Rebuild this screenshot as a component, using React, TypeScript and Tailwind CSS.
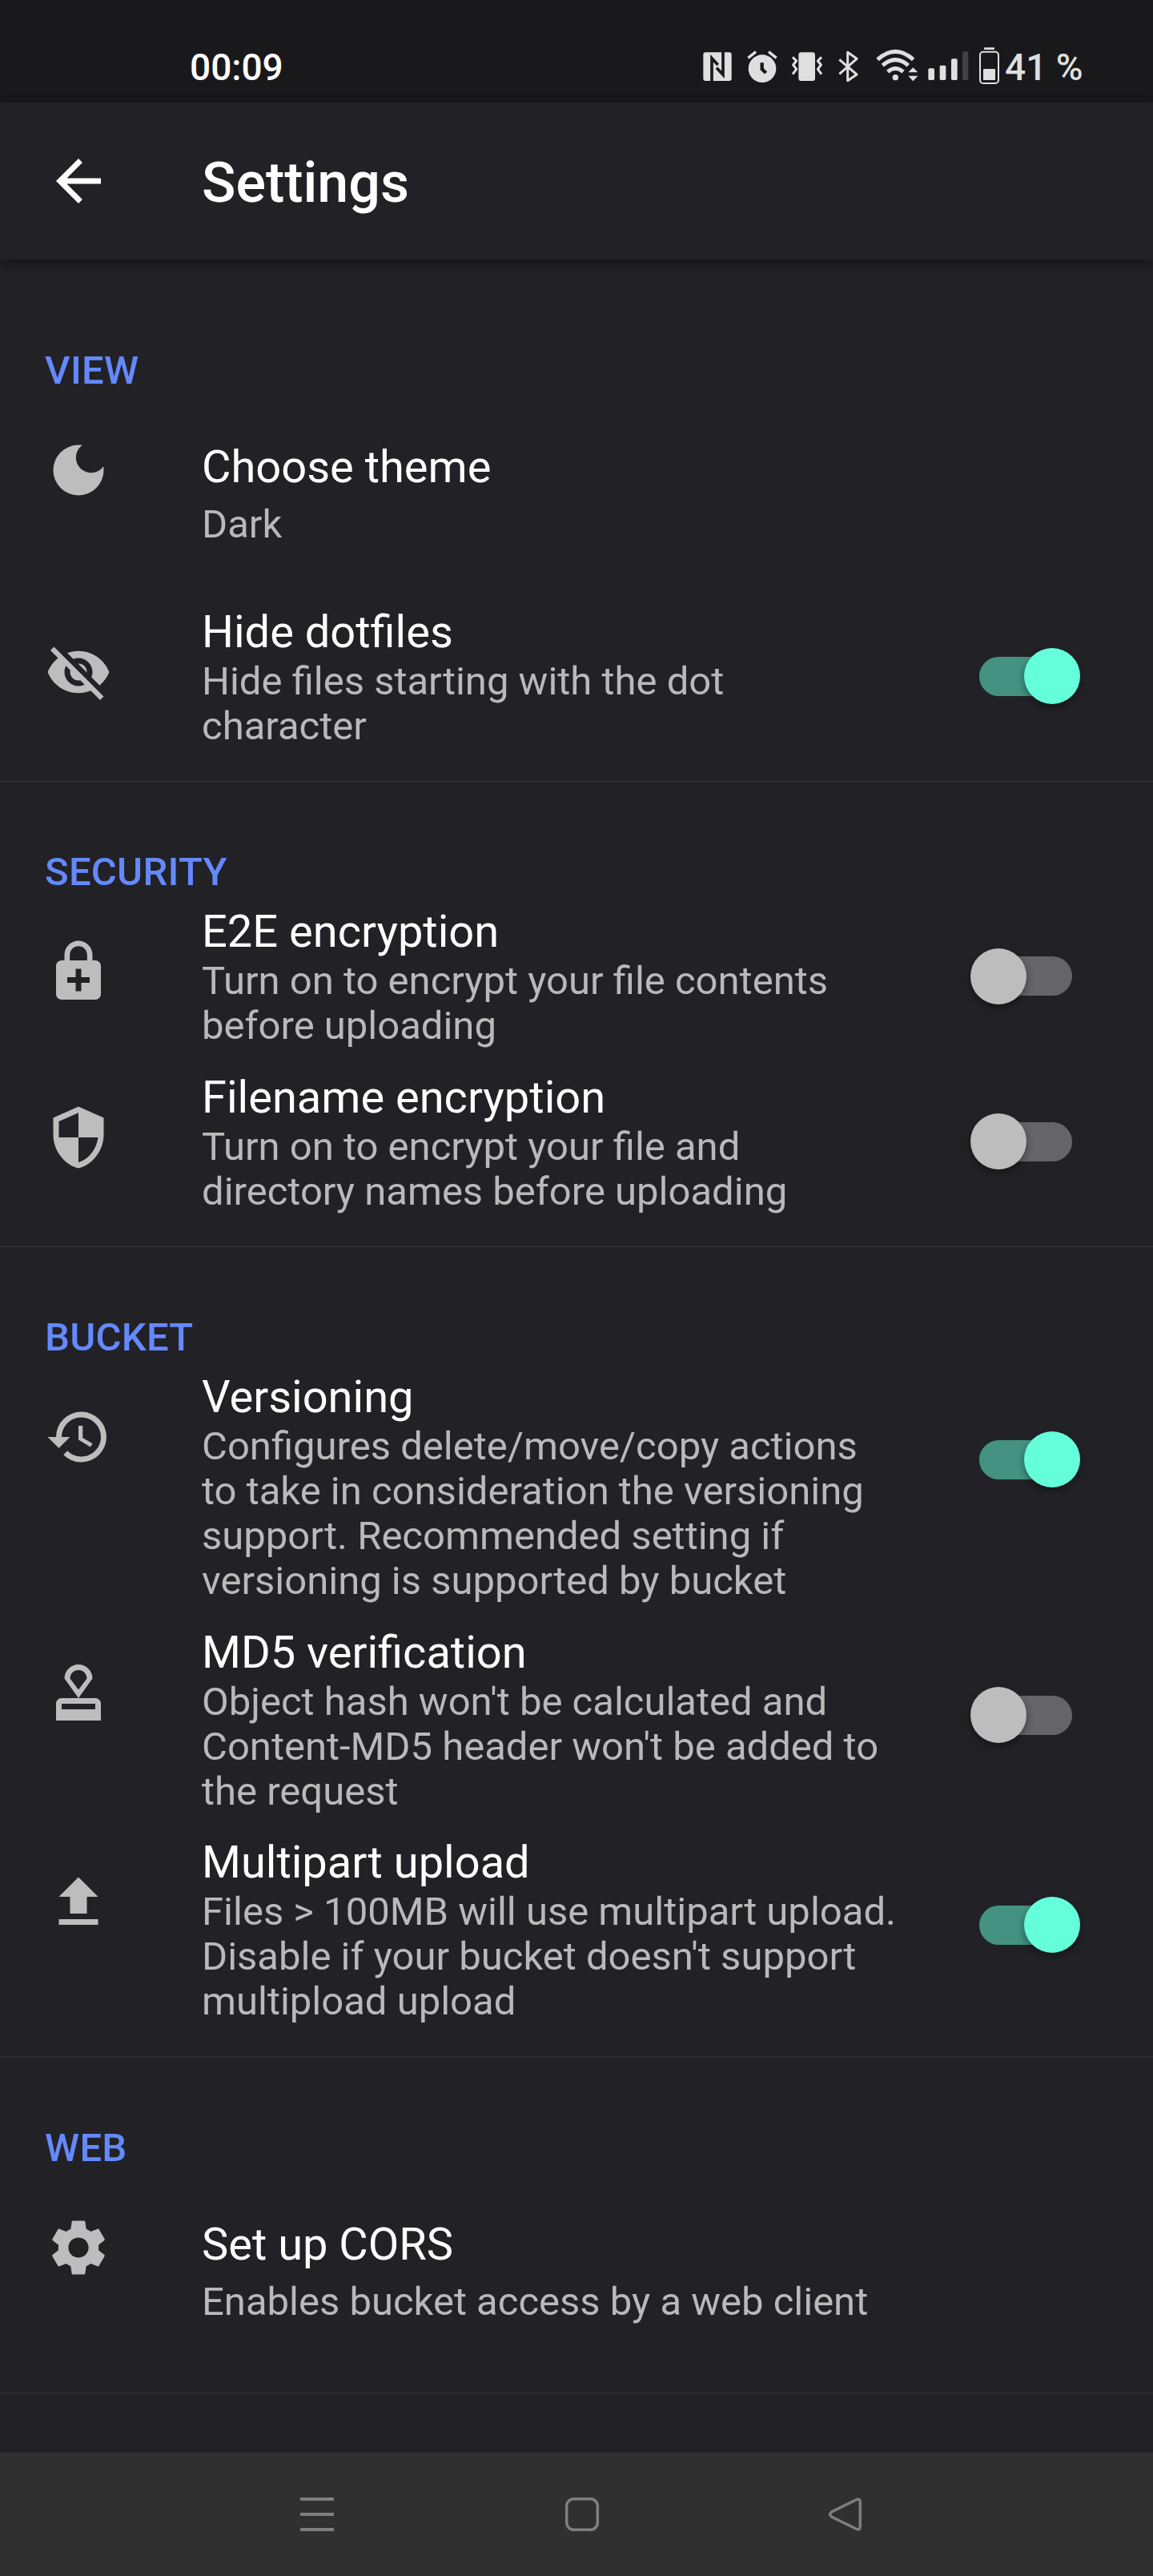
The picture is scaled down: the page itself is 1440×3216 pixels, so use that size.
import type { ReactNode } from "react";
import {
  MdApproval,
  MdArrowBack,
  MdDarkMode,
  MdEnhancedEncryption,
  MdHistory,
  MdSettings,
  MdUpload,
  MdVisibilityOff,
} from "react-icons/md";

/* Status bar glyphs share one 264-unit tall coordinate system (3 units per pixel). */
function StatusIcon({ x, w, className, children }: { x: number; w: number; className: string; children: ReactNode }) {
  return (
    <svg viewBox={`${x} 0 ${w} 264`} className={`mt-10 h-[88px] shrink-0 ${className}`} fill="currentColor">
      {children}
    </svg>
  );
}

function StatusBar() {
  return (
    <header className="flex h-32 items-start bg-[#19191b] text-[46px] leading-[54px] font-medium text-[#dfdfdf]">
      <span className="mt-[57px] ml-[237px] w-[641px] text-white">00:09</span>
      <StatusIcon x={54} w={111} className="w-[37px]">
        <rect x="55" y="76" width="106" height="107" rx="9" />
        <path d="M87 184V98L110 123M129 75V160L105 134" fill="none" stroke="#19191b" strokeWidth="11" />
      </StatusIcon>
      <StatusIcon x={219} w={114} className="ml-[18px] w-[38px]">
        <circle cx="276" cy="137" r="52" />
        <path d="M223 97l29-23M329 97l-29-23" stroke="currentColor" strokeWidth="10" />
        <path d="M275 115v24l15 14" fill="none" stroke="#19191b" strokeWidth="13" />
      </StatusIcon>
      <StatusIcon x={384} w={120} className="ml-[17px] w-10">
        <rect x="412" y="76" width="62" height="107" rx="10" />
        <path
          d="M390 94l14 14-12 15 12 16-14 19M498 94l-14 14 12 15-12 16 14 19"
          fill="none"
          stroke="currentColor"
          strokeWidth="9"
          strokeLinejoin="round"
        />
      </StatusIcon>
      <StatusIcon x={558} w={84} className="ml-[18px] w-7">
        <path
          d="M565 103l65 56-34 23V76l34 24-65 57"
          fill="none"
          stroke="currentColor"
          strokeWidth="9"
          strokeLinejoin="round"
        />
      </StatusIcon>
      <StatusIcon x={699} w={162} className="ml-[19px] w-[54px]">
        <g fill="none" stroke="currentColor" strokeWidth="15">
          <path d="M708 103q67-60 134 0" />
          <path d="M727 125q48-42 96 0" />
          <path d="M746 149q29-25 58 0" />
        </g>
        <circle cx="775" cy="170" r="11" />
        <path d="M823 151l18-18 18 18zM823 164h36l-18 20z" />
      </StatusIcon>
      <StatusIcon x={894} w={156} className="ml-[11px] w-[52px]">
        <rect x="898" y="136" width="23" height="44" rx="5" />
        <rect x="941" y="125" width="23" height="55" rx="5" />
        <rect x="984" y="100" width="23" height="80" rx="5" />
        <rect x="1026" y="73" width="22" height="107" rx="5" fill="#424244" />
      </StatusIcon>
      <StatusIcon x={1086} w={81} className="ml-3 w-[27px]">
        <rect x="1107" y="58" width="39" height="8" rx="3" />
        <rect x="1092" y="74" width="69" height="118" rx="12" fill="none" stroke="currentColor" strokeWidth="6" />
        <rect x="1104" y="138" width="45" height="42" rx="3" />
      </StatusIcon>
      <span className="mt-[57px] ml-1.5 whitespace-nowrap">41 %</span>
    </header>
  );
}

function Switch({ on, className }: { on: boolean; className: string }) {
  return (
    <div className={`relative ml-auto mr-[91px] h-[70px] w-[137px] shrink-0 ${className}`}>
      <div className={`absolute inset-x-[10.5px] top-[10.5px] h-[49px] rounded-full ${on ? "bg-[#439282]" : "bg-[#656567]"}`} />
      <div
        className={`absolute top-0 size-[70px] rounded-full shadow-[0_4px_10px_rgba(0,0,0,0.4)] ${
          on ? "right-0 bg-[#64ffda]" : "left-0 bg-[#bdbdbd]"
        }`}
      />
    </div>
  );
}

type RowProps = {
  icon: ReactNode;
  title: string;
  lines: string[];
  on?: boolean;
  className: string;
  switchClass?: string;
};

function Row({ icon, title, lines, on, className, switchClass = "" }: RowProps) {
  const plain = on === undefined;
  return (
    <div className={`flex items-start ${className}`}>
      <div className={`ml-14 w-[196px] shrink-0 text-[84px] text-[#bdbdbd] ${plain ? "-mt-[5px]" : "mt-[41px]"}`}>{icon}</div>
      <div className="whitespace-nowrap">
        <div className="text-[56px] leading-[66px] text-white">{title}</div>
        <div className={`text-[49px] leading-[56px] text-[#b9b9ba] ${plain ? "mt-[11px]" : "mt-px"}`}>
          {lines.map((line) => (
            <div key={line}>{line}</div>
          ))}
        </div>
      </div>
      {!plain && <Switch on={on} className={switchClass} />}
    </div>
  );
}

function SectionTitle({ children, className }: { children: string; className: string }) {
  return (
    <h2 className={`ml-14 h-14 text-[49px] leading-[56px] font-medium tracking-[0.25px] text-[#6489ff] ${className}`}>
      {children}
    </h2>
  );
}

export default function App() {
  return (
    <div className="flex h-[3216px] w-[1440px] flex-col overflow-hidden bg-[#222226] font-['Roboto',sans-serif]">
      <StatusBar />
      <div className="relative flex h-[196px] shrink-0 items-center bg-[#222226] shadow-[0_6px_14px_rgba(0,0,0,0.35)]">
        <MdArrowBack className="ml-14 size-[84px] text-white" />
        <h1 className="mt-[3px] ml-28 text-[70px] leading-[82px] font-medium text-white">Settings</h1>
      </div>

      <main className="flex h-[2738px] shrink-0 flex-col">
        <SectionTitle className="mt-[111px]">VIEW</SectionTitle>
        <Row className="mt-[59px] h-[206px]" icon={<MdDarkMode />} title="Choose theme" lines={["Dark"]} />
        <Row
          className="h-[206px]"
          icon={<MdVisibilityOff />}
          title="Hide dotfiles"
          lines={["Hide files starting with the dot", "character"]}
          on
          switchClass="mt-[53px]"
        />
        <div className="mt-[13px] h-px bg-[#38383b]" />

        <SectionTitle className="mt-[85px]">SECURITY</SectionTitle>
        <Row
          className="mt-[13px] h-[207px]"
          icon={<MdEnhancedEncryption />}
          title="E2E encryption"
          lines={["Turn on to encrypt your file contents", "before uploading"]}
          on={false}
          switchClass="mt-[53.5px]"
        />
        <Row
          className="h-[207px]"
          icon={
            <svg viewBox="0 0 24 24" className="size-[84px]" fill="currentColor">
              <path d="M12 12H19C18.47 16.11 15.72 19.78 12 20.92V12H5V6.3L12 3.19M12 1L3 5V11C3 16.55 6.84 21.73 12 23C17.16 21.73 21 16.55 21 11V5L12 1Z" />
            </svg>
          }
          title="Filename encryption"
          lines={["Turn on to encrypt your file and", "directory names before uploading"]}
          on={false}
          switchClass="mt-[53px]"
        />
        <div className="mt-3 h-px bg-[#38383b]" />

        <SectionTitle className="mt-[85px]">BUCKET</SectionTitle>
        <Row
          className="mt-[13px] h-[319px]"
          icon={<MdHistory />}
          title="Versioning"
          lines={[
            "Configures delete/move/copy actions",
            "to take in consideration the versioning",
            "support. Recommended setting if",
            "versioning is supported by bucket",
          ]}
          on
          switchClass="mt-[76px]"
        />
        <Row
          className="h-[262px]"
          icon={<MdApproval />}
          title="MD5 verification"
          lines={["Object hash won't be calculated and", "Content-MD5 header won't be added to", "the request"]}
          on={false}
          switchClass="mt-[76px]"
        />
        <Row
          className="h-[262px]"
          icon={<MdUpload />}
          title="Multipart upload"
          lines={["Files > 100MB will use multipart upload.", "Disable if your bucket doesn't support", "multipload upload"]}
          on
          switchClass="mt-[76px]"
        />
        <div className="mt-[13px] h-0.5 bg-[#2d2d31]" />

        <SectionTitle className="mt-[85px]">WEB</SectionTitle>
        <Row
          className="mt-[59px] h-[218px]"
          icon={<MdSettings />}
          title="Set up CORS"
          lines={["Enables bucket access by a web client"]}
        />
        <div className="h-0.5 bg-[#2d2d31]" />
      </main>

      <nav className="flex h-[154px] shrink-0 items-start bg-[#303030] pt-[55px] pl-[374px] text-[#7f7f7f]">
        <svg viewBox="0 0 44 44" className="size-11" fill="none" stroke="currentColor" strokeWidth="4">
          <path d="M1 3h42M1 22h42M1 41h42" />
        </svg>
        <svg viewBox="0 0 44 44" className="ml-[287px] size-11" fill="none" stroke="currentColor" strokeWidth="3.5">
          <rect x="2.7" y="2.7" width="38.6" height="38.6" rx="9" />
        </svg>
        <svg viewBox="0 0 44 44" className="ml-[285px] size-11" fill="none" stroke="currentColor" strokeWidth="3.5">
          <path d="M36 3.5L4.5 19Q0.8 22 4.5 25L36 40.5Q40.3 42 40.3 37V7Q40.3 2 36 3.5Z" />
        </svg>
      </nav>
    </div>
  );
}
